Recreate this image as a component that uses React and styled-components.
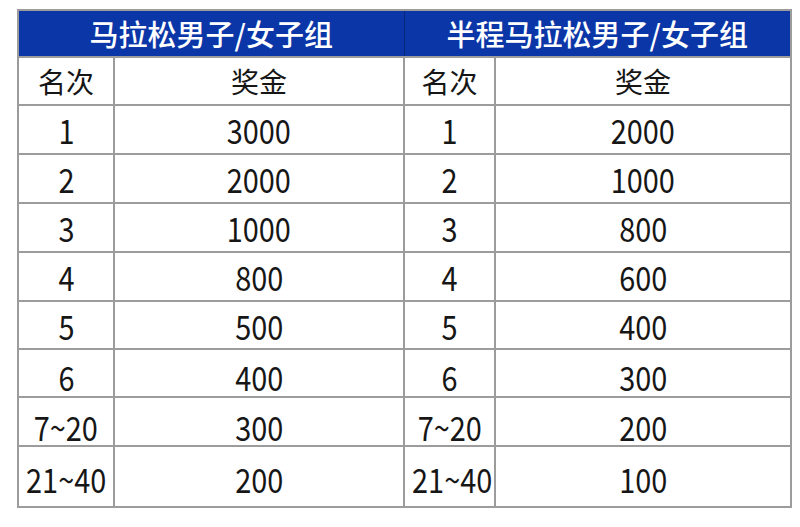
import React from "react";
import styled, { createGlobalStyle } from "styled-components";

const Global = createGlobalStyle`
  html, body { margin: 0; padding: 0; background: #ffffff; }
  body { font-family: "Noto Sans CJK SC", "Noto Sans", sans-serif; }
`;

const Page = styled.div`
  width: 800px;
  height: 527px;
  padding: 9px 0 0 17px;
  box-sizing: border-box;
  background: #fff;
`;

const Table = styled.table`
  border-collapse: collapse;
  table-layout: fixed;
  width: 773px;
  border: 2px solid #9c9c9c;
`;

const TitleCell = styled.th`
  background: #0b36a7;
  color: #ffffff;
  font-size: 29px;
  font-weight: 500;
  height: 47px;
  padding: 0;
  box-sizing: border-box;
  text-align: center;
  line-height: 1;
  border-left: ${(p) => (p.$split ? "1px solid #07257a" : "none")};
  border-bottom: 2px solid #9c9c9c;
`;

const Cell = styled.td`
  height: ${(p) => p.$h}px;
  padding: ${(p) => p.$pad || 0}px 0 0;
  box-sizing: border-box;
  text-align: center;
  vertical-align: middle;
  color: #161616;
  font-size: ${(p) => (p.$cjk ? 28 : 34)}px;
  line-height: 1;
  border: 2px solid #9c9c9c;
`;

const Num = styled.span`
  display: inline-block;
  transform: scaleX(0.85);
`;

const rows = [
  ["1", "3000", "2000"],
  ["2", "2000", "1000"],
  ["3", "1000", "800"],
  ["4", "800", "600"],
  ["5", "500", "400"],
  ["6", "400", "300"],
  ["7~20", "300", "200"],
  ["21~40", "200", "100"],
];

const heights = [49, 49, 49, 49, 48, 48, 49, 61];
const pads = [0, 0, 0, 0, 1, 8, 10, 5];

export default function App() {
  return (
    <>
      <Global />
      <Page>
        <Table>
          <colgroup>
            <col style={{ width: 96 }} />
            <col style={{ width: 290 }} />
            <col style={{ width: 91 }} />
            <col style={{ width: 296 }} />
          </colgroup>
          <thead>
            <tr>
              <TitleCell colSpan={2}>马拉松男子/女子组</TitleCell>
              <TitleCell colSpan={2} $split>半程马拉松男子/女子组</TitleCell>
            </tr>
          </thead>
          <tbody>
            <tr>
              <Cell $h={48} $cjk>名次</Cell>
              <Cell $h={48} $cjk>奖金</Cell>
              <Cell $h={48} $cjk>名次</Cell>
              <Cell $h={48} $cjk>奖金</Cell>
            </tr>
            {rows.map((r, i) => (
              <tr key={r[0]}>
                <Cell $h={heights[i]} $pad={pads[i]}><Num>{r[0]}</Num></Cell>
                <Cell $h={heights[i]} $pad={pads[i]}><Num>{r[1]}</Num></Cell>
                <Cell $h={heights[i]} $pad={pads[i]}><Num>{r[0]}</Num></Cell>
                <Cell $h={heights[i]} $pad={pads[i]}><Num>{r[2]}</Num></Cell>
              </tr>
            ))}
          </tbody>
        </Table>
      </Page>
    </>
  );
}
